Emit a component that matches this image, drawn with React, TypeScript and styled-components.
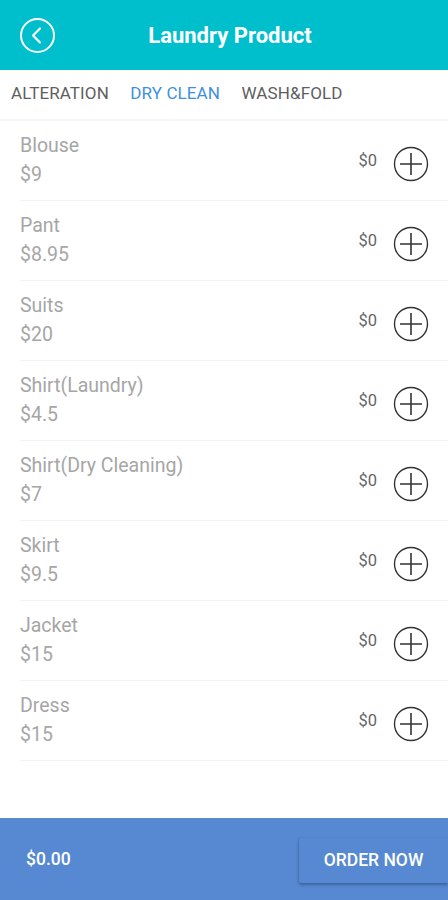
import React from "react";
import styled, { createGlobalStyle } from "styled-components";

const Global = createGlobalStyle`
  html, body { margin: 0; padding: 0; background: #fff; }
  body { font-family: Roboto, "Noto Sans", Arial, sans-serif; }
  * { box-sizing: border-box; }
`;

const Page = styled.div`
  width: 448px;
  height: 900px;
  display: flex;
  flex-direction: column;
  background: #fff;
`;

const Header = styled.header`
  height: 70px;
  background: #00bfcd;
  display: flex;
  align-items: center;
  padding-left: 19px;
`;

const BackBtn = styled.button`
  width: 37px;
  height: 37px;
  border: none;
  background: transparent;
  padding: 0;
  display: flex;
  align-items: center;
  justify-content: center;
  margin-top: 1px;
`;

const Title = styled.h1`
  flex: 1;
  margin: 0 0 0 -56px;
  text-align: center;
  color: #fff;
  font-size: 22px;
  font-weight: 700;
  transform: translateX(6px);
`;

const Tabs = styled.nav`
  height: 51px;
  display: flex;
  align-items: center;
  gap: 21.5px;
  padding-left: 11px;
  padding-bottom: 4px;
  border-bottom: 2px solid #f6f6f6;
`;

const Tab = styled.span<{ $active?: boolean }>`
  font-size: 17px;
  color: ${(p) => (p.$active ? "#3d8fe0" : "#5e5e5e")};
  letter-spacing: 0.1px;
`;

const List = styled.div`
  flex: 1;
  display: flex;
  flex-direction: column;
`;

const Row = styled.div`
  height: 80px;
  margin-left: 20px;
  display: flex;
  align-items: center;
  border-bottom: 1.5px solid #f3f3f3;
  padding-right: 19px;
`;

const Info = styled.div`
  flex: 1;
  display: flex;
  flex-direction: column;
  gap: 6px;
  margin-top: -2px;
`;

const Name = styled.div`
  font-size: 19.5px;
  color: #a6a6a6;
  line-height: 23px;
`;

const Price = styled(Name)``;

const Total = styled.span`
  font-size: 16.5px;
  color: #666;
  margin-right: 16px;
  margin-top: 0px;
`;

const AddBtn = styled.button`
  width: 36px;
  height: 36px;
  padding: 0;
  border: none;
  background: transparent;
  display: flex;
  align-items: center;
  justify-content: center;
  margin-top: 7px;
`;

const Footer = styled.footer`
  height: 82px;
  background: #5689d1;
  display: flex;
  align-items: center;
  justify-content: space-between;
  padding-left: 26px;
`;

const Sum = styled.span`
  color: #fff;
  font-size: 17.5px;
  font-weight: 500;
`;

const OrderBtn = styled.button`
  width: 149px;
  height: 45px;
  border: none;
  background: #5689d1;
  color: #fff;
  font-family: inherit;
  font-size: 17.5px;
  font-weight: 500;
  border-radius: 2px 0 0 2px;
  box-shadow: 0 2px 3px rgba(0, 0, 0, 0.25), -1px 0 2px rgba(0, 0, 0, 0.08);
  margin-top: 2px;
`;

const items = [
  ["Blouse", "$9"],
  ["Pant", "$8.95"],
  ["Suits", "$20"],
  ["Shirt(Laundry)", "$4.5"],
  ["Shirt(Dry Cleaning)", "$7"],
  ["Skirt", "$9.5"],
  ["Jacket", "$15"],
  ["Dress", "$15"],
];

const BackIcon = () => (
  <svg width="37" height="37" viewBox="0 0 37 37">
    <circle cx="18.5" cy="18.5" r="16.5" fill="none" stroke="#fff" strokeWidth="2" />
    <path d="M21 11.5 L14 18.5 L21 25.5" fill="none" stroke="#fff" strokeWidth="2.2" strokeLinecap="round" strokeLinejoin="round" />
  </svg>
);

const PlusIcon = () => (
  <svg width="36" height="36" viewBox="0 0 36 36">
    <circle cx="18" cy="18" r="16.5" fill="none" stroke="#333" strokeWidth="1.4" />
    <path d="M7 18 H29 M18 7 V29" stroke="#333" strokeWidth="1.6" />
  </svg>
);

export default function App() {
  return (
    <Page>
      <Global />
      <Header>
        <BackBtn aria-label="back">
          <BackIcon />
        </BackBtn>
        <Title>Laundry Product</Title>
      </Header>
      <Tabs>
        <Tab>ALTERATION</Tab>
        <Tab $active>DRY CLEAN</Tab>
        <Tab>WASH&amp;FOLD</Tab>
      </Tabs>
      <List>
        {items.map(([n, p]) => (
          <Row key={n}>
            <Info>
              <Name>{n}</Name>
              <Price>{p}</Price>
            </Info>
            <Total>$0</Total>
            <AddBtn aria-label="add">
              <PlusIcon />
            </AddBtn>
          </Row>
        ))}
      </List>
      <Footer>
        <Sum>$0.00</Sum>
        <OrderBtn>ORDER NOW</OrderBtn>
      </Footer>
    </Page>
  );
}
